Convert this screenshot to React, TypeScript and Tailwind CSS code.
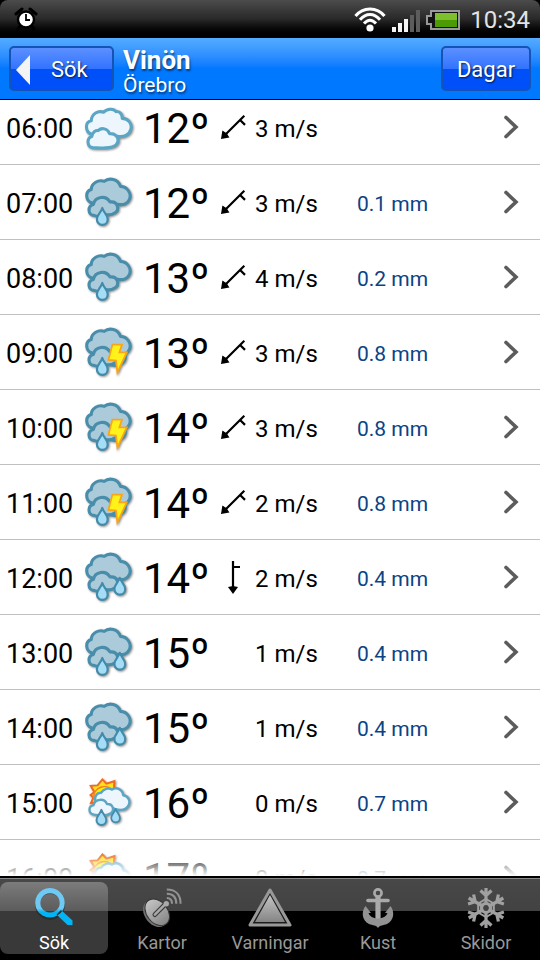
import React, { useState } from 'react';

type Weather = 'cloudy' | 'rain' | 'thunder' | 'showers' | 'sunShowers';

interface Hour {
  time: string;
  weather: Weather;
  temp: number;
  wind: number;
  windAngle?: number;
  rain?: string;
}

const hours: Hour[] = [
  { time: '06:00', weather: 'cloudy', temp: 12, wind: 3, windAngle: 45 },
  { time: '07:00', weather: 'rain', temp: 12, wind: 3, windAngle: 45, rain: '0.1' },
  { time: '08:00', weather: 'rain', temp: 13, wind: 4, windAngle: 45, rain: '0.2' },
  { time: '09:00', weather: 'thunder', temp: 13, wind: 3, windAngle: 45, rain: '0.8' },
  { time: '10:00', weather: 'thunder', temp: 14, wind: 3, windAngle: 45, rain: '0.8' },
  { time: '11:00', weather: 'thunder', temp: 14, wind: 2, windAngle: 45, rain: '0.8' },
  { time: '12:00', weather: 'showers', temp: 14, wind: 2, windAngle: 0, rain: '0.4' },
  { time: '13:00', weather: 'showers', temp: 15, wind: 1, rain: '0.4' },
  { time: '14:00', weather: 'showers', temp: 15, wind: 1, rain: '0.4' },
  { time: '15:00', weather: 'sunShowers', temp: 16, wind: 0, rain: '0.7' },
  { time: '16:00', weather: 'sunShowers', temp: 17, wind: 0, rain: '0.7' },
];

const BIG_CLOUD =
  'M8 26C1.5 24 .8 14.5 7.2 12.6C7.5 6 14.5 2.4 20.2 4.4C25 .4 34 1.6 36.4 9.4C43.5 9.6 47.6 16.6 45.6 22C44 26.5 39 28.6 34 27.2L22 32Z';
const SMALL_CLOUD =
  'M10 38.4C3.6 38 3.4 28.6 9.4 27.4C11 19.4 21.8 17.8 26 25C34 24 36 33 30.6 36C27 38.6 24 38 21.6 37.6C18 39.6 13.4 39.8 10 38.4Z';

const Drop = ({ x, y, s = 1 }: { x: number; y: number; s?: number }) => (
  <path
    transform={`translate(${x} ${y}) scale(${s})`}
    d="M0 -0.6C1.4 4 5.4 6.4 5.4 10.6C5.4 14 3 16.2 0 16.2S-5.4 14 -5.4 10.6C-5.4 6.4 -1.4 4 0 -0.6Z"
    fill="#a5ddf6"
    stroke="#438bab"
    strokeWidth="2.2"
    strokeLinejoin="round"
  />
);

const WeatherIcon = ({ type }: { type: Weather }) => {
  const light = type === 'cloudy' || type === 'sunShowers';
  const fill = light ? '#edf6fc' : '#abcbdb';
  const stroke = light ? '#5ba6c5' : '#488daa';
  const clouds = { fill, stroke, strokeWidth: 3.1, strokeLinejoin: 'round' as const };

  return (
    <svg viewBox="0 0 50 50" className="size-[50px] drop-shadow-[1px_1px_1px_rgba(0,0,0,0.45)]" aria-hidden="true">
      {type === 'cloudy' && (
        <g {...clouds}>
          <path d="M8 32.4C1 30 .6 20.4 7.2 18.8C7.6 11.6 14.4 8.2 19.6 10.2C23.4 6.2 29.6 6.4 32 9.6C36.2 9 38.4 13 38.2 16.4C44.4 16.4 48.4 22 46.8 27.4C45.4 33 39.5 35.6 33.6 34.2Z" />
          <path d="M8.6 45.6C3 44.8 2.4 36 7.8 34.4C8.8 29.6 12 28.2 14 28.6C17.8 25 23.6 26.6 25.6 31.6C33.4 31.2 36.2 38.4 32 42.8C28.4 46.4 16 46.4 8.6 45.6Z" />
        </g>
      )}
      {type === 'sunShowers' && (
        <>
          <path
            d="M7 26L9.4 20.6L6.6 18L10.4 15L6.8 8.8L13.6 8.4L18.4 2.4L22.4 6.6L30.4 4.2L30 10L32.4 14L27 23Z"
            fill="#ffe21a"
            stroke="#f26a21"
            strokeWidth="2"
          />
          <path d="M10 22C8 9 25 6 28 14Z" fill="#fff200" stroke="#f58220" strokeWidth="1.6" />
          <g {...clouds} strokeWidth="2.4">
            <path d="M12 25C9.6 20 13 15.6 17 15.8C20 11.4 24.6 10.6 28 12.6C32.6 9.6 38.6 12.4 39.2 18.2C44.6 19 46.8 24.4 44.4 28.6C42 33 36.6 33.6 31 32Z" />
            <path d="M10 37.6C3.8 36.6 4.4 28.8 9.4 28.4C11.4 21.4 20.4 21 23 27C29.4 26.6 30.6 33.6 26.8 36.2C23 38.6 15 38.4 10 37.6Z" />
          </g>
          <Drop x={31.6} y={32.4} s={0.8} />
          <Drop x={17.4} y={33.4} s={0.9} />
        </>
      )}
      {!light && (
        <>
          <g {...clouds}>
            <path d={BIG_CLOUD} />
            {type === 'thunder' && <path d="M24 26L41 24C42 33 38 38.6 31 38.4L24 38Z" stroke="none" />}
            {type === 'thunder' && <path d="M41.6 27C42 34 38 38.6 31 38.4L22 37" fill="none" />}
            <path d={SMALL_CLOUD} />
          </g>
          {type === 'showers' && <Drop x={35.8} y={26.4} />}
          <Drop x={18.3} y={31.6} />
          {type === 'thunder' && (
            <path
              d="M28.4 17.6H38L35.4 25.4H42.8L33.4 45.4L32 33.6L24.4 33Z"
              fill="#fff21a"
              stroke="#f9a51a"
              strokeWidth="1.8"
            />
          )}
        </>
      )}
    </svg>
  );
};

const WindArrow = ({ angle }: { angle: number }) => (
  <svg viewBox="-18 -18 36 36" className="size-9" aria-hidden="true">
    <g transform={`rotate(${angle})`}>
      <path d="M0 -16V12M0 -10H7" fill="none" stroke="#000" strokeWidth="2.2" />
      <path d="M-5 10L0 9L5 10L0 17Z" />
    </g>
  </svg>
);

const HourRow = ({ hour }: { hour: Hour }) => (
  <li>
    <a
      href={`#${hour.time}`}
      className="grid h-[75px] grid-cols-[78px_59px_72px_40px_102px_1fr_16px] items-center border-b border-[#c0c0c0] pr-5 pl-1.5 leading-none text-black"
    >
      <span className="pt-1 text-[27px]">{hour.time}</span>
      <WeatherIcon type={hour.weather} />
      <span className="pt-1 text-[42px]">{hour.temp}º</span>
      <span>{hour.windAngle !== undefined && <WindArrow angle={hour.windAngle} />}</span>
      <span className="pt-1 text-2xl leading-none">{hour.wind} m/s</span>
      <span className="pt-1 text-[21px] text-[#0c4384]">{hour.rain && `${hour.rain} mm`}</span>
      <svg viewBox="0 0 16 24" className="h-6 w-4" aria-hidden="true">
        <path d="M2 2.5L12 12L2 21.5" fill="none" stroke="#5c5c5c" strokeWidth="3.6" strokeLinecap="round" />
      </svg>
    </a>
  </li>
);

const StatusBar = () => (
  <div className="bg-black">
    <div className="flex h-[38px] items-center rounded-t-lg bg-linear-to-b from-[#4c4c4c] via-[#292929] via-50% to-black px-2.5 text-[#e4e4e4]">
      <svg viewBox="0 0 24 24" className="ml-1 size-6" aria-label="Alarm">
        <path d="M2 7L8 2M22 7L16 2M6 19L4 22M18 19L20 22" stroke="#000" strokeWidth="3" strokeLinecap="round" />
        <circle cx="12" cy="12.5" r="8" fill="#fff" stroke="#000" strokeWidth="2.4" />
        <path d="M12 7V13H16" fill="none" stroke="#000" strokeWidth="1.8" />
      </svg>
      <svg viewBox="0 0 32 28" className="ml-auto h-7 w-8" aria-label="Wi-Fi">
        <g fill="none" stroke="#fff" strokeWidth="3">
          <path d="M1.5 11C9 1.5 23 1.5 30.5 11" />
          <path d="M6 14.8C12 7.8 20 7.8 26 14.8" />
          <path d="M10 18.6C14 14 18 14 22 18.6" />
        </g>
        <circle cx="16" cy="23" r="3.6" fill="#fff" />
      </svg>
      <svg viewBox="0 0 30 24" className="mt-1 ml-1.5 h-6 w-[30px]" aria-label="Signal">
        <path d="M0 18h4v5H0zM6 14h4v9H6zM12 10h4v13h-4z" fill="#f4f4f4" />
        <path d="M18 6h4v17h-4zM24 1h4v22h-4z" fill="#5c5c5c" />
      </svg>
      <svg viewBox="0 0 34 20" className="mt-0.5 ml-1 h-5 w-[34px]" aria-label="Battery">
        <path d="M5 1H33V19H5V14H1V6H5Z" fill="#111" stroke="#999" strokeWidth="2" />
        <path d="M9 3H31V10H9Z" fill="#7dbf2e" />
        <path d="M9 10H31V17H9Z" fill="#4c9a04" />
      </svg>
      <span className="ml-2.5 pt-0.5 text-2xl leading-none">10:34</span>
    </div>
  </div>
);

const headerButton =
  'h-[45px] rounded-[5px] border-2 border-[#1553b4] bg-linear-to-b from-[#5b90ff] from-0% via-[#3273ff] via-50% to-[#0050fa] to-50% text-[22px] leading-none text-white [text-shadow:1px_1px_2px_rgba(0,0,0,0.7)]';

const Header = () => (
  <header className="flex h-[62px] shrink-0 items-center border-b border-black bg-linear-to-b from-[#55acff] to-[#0078ff] to-50% px-[9px]">
    <button type="button" className={`${headerButton} flex w-[105px] items-center pt-0.5 pl-1`}>
      <svg viewBox="0 0 16 30" className="h-[30px] w-4" aria-hidden="true">
        <path d="M1 15L15 0V30Z" fill="#f4f4f4" />
      </svg>
      <span className="ml-5">Sök</span>
    </button>
    <div className="ml-[9px] flex-1 pt-1 text-white [text-shadow:1px_2px_2px_rgba(0,0,0,0.5)]">
      <h1 className="text-[26px] leading-7 font-bold">Vinön</h1>
      <p className="text-[21px] leading-[22px]">Örebro</p>
    </div>
    <button type="button" className={`${headerButton} w-[90px] pt-0.5`}>
      Dagar
    </button>
  </header>
);

const SearchIcon = () => (
  <svg viewBox="0 0 40 40" className="size-10" aria-hidden="true">
    <defs>
      <linearGradient id="search" x1="0" y1="0" x2="0" y2="1">
        <stop offset="0.55" stopColor="#6fc9f5" />
        <stop offset="0.65" stopColor="#00b4f5" />
      </linearGradient>
    </defs>
    <circle cx="16" cy="17" r="13" fill="none" stroke="#222" strokeWidth="4" opacity="0.5" />
    <path
      fill="url(#search)"
      fillRule="evenodd"
      d="M16 0A14.8 14.8 0 1 1 15.9 0ZM16 5.2A9.7 9.7 0 1 0 16.1 5.2ZM22.5 26.5L27 22L38.5 32.5V37H33.5Z"
    />
  </svg>
);

const DishIcon = () => (
  <svg viewBox="0 0 42 42" className="h-10 w-[42px]" fill="none" aria-hidden="true">
    <ellipse cx="14" cy="27" rx="11" ry="15.5" transform="rotate(-38 14 27)" fill="#707070" />
    <ellipse cx="16" cy="25.5" rx="11" ry="15.5" transform="rotate(-38 16 25.5)" fill="url(#tabIcon)" stroke="#333" />
    <path d="M13.5 28L25 16.5" stroke="#3b3b3b" strokeWidth="5" strokeLinecap="round" />
    <path d="M13.5 28L25 16.5" stroke="#aaa" strokeWidth="2.6" strokeLinecap="round" />
    <circle cx="25.5" cy="16.5" r="2.8" fill="#aaa" />
    <path d="M26 10.5C30 10.5 31.5 13 31.5 16.5M26 6C33 6 36 10 36 16.5M26 1.5C36 1.5 40.5 8 40.5 16.5" stroke="#929292" strokeWidth="2.2" />
  </svg>
);

const WarningIcon = () => (
  <svg viewBox="0 0 44 40" className="h-10 w-11" strokeLinejoin="round" aria-hidden="true">
    <path d="M22 2L42 37H2Z" fill="#1c1c1c" stroke="#999" strokeWidth="3" />
    <path d="M22 7L37 34H7Z" fill="url(#tabIcon)" />
  </svg>
);

const AnchorIcon = () => (
  <svg viewBox="0 0 34 40" className="h-10 w-[34px]" fill="none" stroke="#aaa" aria-hidden="true">
    <circle cx="17" cy="5" r="3.6" strokeWidth="2.6" />
    <path d="M7 12.5H27" strokeWidth="3.6" strokeLinecap="round" />
    <path d="M17 9V35" strokeWidth="5.2" />
    <path
      d="M4.5 18L10 25H7.5C8.5 28 12 30.5 17 30.5S25.5 28 26.5 25H24L29.5 18C34 24 33 32.5 26 36C22 37.5 19 37 17 40C15 37 12 37.5 8 36C1 32.5 0 24 4.5 18Z"
      fill="#929292"
      stroke="none"
    />
  </svg>
);

const SnowIcon = () => (
  <svg viewBox="-20 -20 40 40" className="size-10" fill="none" stroke="#a0a0a0" strokeWidth="3.2" aria-hidden="true">
    {[0, 60, 120, 180, 240, 300].map((angle) => (
      <path key={angle} transform={`rotate(${angle})`} d="M0 -3V-20M-5.5 -17.5L0 -12.5L5.5 -17.5" />
    ))}
    <path d="M0 -9L7.8 -4.5V4.5L0 9L-7.8 4.5V-4.5Z" strokeWidth="2" />
    <circle r="4.5" />
  </svg>
);

const tabs = [
  { label: 'Sök', Icon: SearchIcon },
  { label: 'Kartor', Icon: DishIcon },
  { label: 'Varningar', Icon: WarningIcon },
  { label: 'Kust', Icon: AnchorIcon },
  { label: 'Skidor', Icon: SnowIcon },
];

const TabBar = () => {
  const [active, setActive] = useState('Sök');

  return (
    <nav className="shrink-0 border-t-2 border-black bg-black">
      <svg className="absolute size-0" aria-hidden="true">
        <linearGradient id="tabIcon" x1="0" y1="0" x2="0" y2="1">
          <stop offset="0" stopColor="#c4c4c4" />
          <stop offset="1" stopColor="#858585" />
        </linearGradient>
      </svg>
      <div className="grid grid-cols-5 border-t border-[#8a8a8a] bg-linear-to-b from-[#484848] from-0% via-[#424242] via-40% to-black to-40% pt-[3px] pb-1.5">
        {tabs.map(({ label, Icon }) => (
          <button
            key={label}
            type="button"
            onClick={() => setActive(label)}
            className={`flex h-[72px] flex-col items-center rounded-lg pt-1.5 text-lg leading-none ${
              active === label
                ? 'bg-linear-to-b from-[#7c7c7c] from-0% via-[#5c5c5c] via-40% to-[#393939] to-40% text-white'
                : 'text-[#989898]'
            }`}
          >
            <Icon />
            <span className="mt-1.5">{label}</span>
          </button>
        ))}
      </div>
    </nav>
  );
};

const App: React.FC = () => (
  <div className="flex h-screen flex-col overflow-hidden bg-white font-[Roboto,sans-serif]">
    <StatusBar />
    <Header />
    <main className="relative min-h-0 flex-1 overflow-hidden">
      <ul className="-mt-2.5">
        {hours.map((hour) => (
          <HourRow key={hour.time} hour={hour} />
        ))}
      </ul>
      <div className="pointer-events-none absolute inset-x-0 bottom-0 h-6 bg-linear-to-b from-white/0 to-white" />
    </main>
    <TabBar />
  </div>
);

export default App;
